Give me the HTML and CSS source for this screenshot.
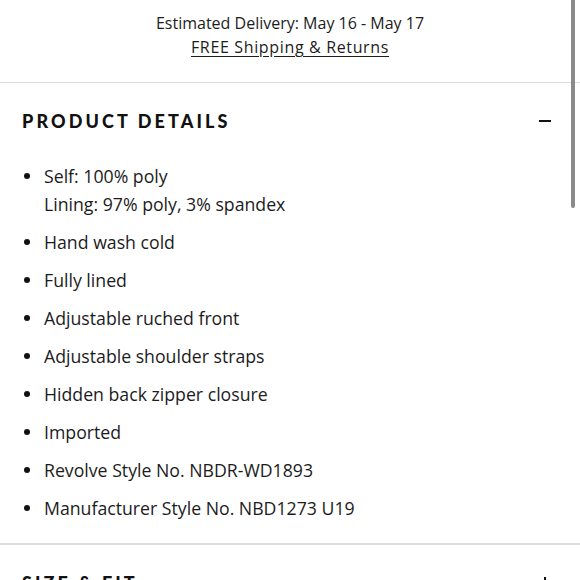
FILE: index.html
```html
<!DOCTYPE html>
<html>
<head>
<meta charset="utf-8">
<link rel="stylesheet" href="styles.css">
</head>
<body>
<div class="page">
  <div class="delivery">
    <div>Estimated Delivery: May 16 - May 17</div>
    <div><a class="link" href="#">FREE Shipping &amp; Returns</a></div>
  </div>
  <section class="acc">
    <div class="acc-head">
      <h2>PRODUCT DETAILS</h2>
      <span class="minus"></span>
    </div>
    <ul class="details">
      <li>Self: 100% poly<br>Lining: 97% poly, 3% spandex</li>
      <li>Hand wash cold</li>
      <li>Fully lined</li>
      <li>Adjustable ruched front</li>
      <li>Adjustable shoulder straps</li>
      <li>Hidden back zipper closure</li>
      <li>Imported</li>
      <li>Revolve Style No. NBDR-WD1893</li>
      <li>Manufacturer Style No. NBD1273 U19</li>
    </ul>
  </section>
  <section class="acc acc-thick">
    <div class="acc-head">
      <h2>SIZE &amp; FIT</h2>
      <span class="plus"></span>
    </div>
  </section>
  <div class="scrollbar"></div>
</div>
</body>
</html>
```
FILE: styles.css
```css
html, body {
  margin: 0;
  padding: 0;
  background: #fff;
}
body {
  font-family: "Open Sans", "Liberation Sans", sans-serif;
  color: #1c1c1c;
  overflow: hidden;
}
.page {
  width: 580px;
  height: 580px;
  overflow: hidden;
}
.delivery {
  text-align: center;
  font-size: 16px;
  line-height: 24px;
  padding: 11px 0 23px;
  border-bottom: 1px solid #dcdcdc;
}
.link {
  color: #1c1c1c;
  text-decoration: underline;
  text-underline-offset: 3px;
  letter-spacing: 0.65px;
}
.acc-head {
  display: flex;
  align-items: center;
  justify-content: space-between;
  padding: 26px 29px 0 22px;
  height: 24px;
}
.acc-head h2 {
  margin: 0;
  font-family: "Lato", "Liberation Sans", sans-serif;
  font-weight: 900;
  font-size: 18px;
  letter-spacing: 3.1px;
  line-height: 24px;
  color: #111;
}
.minus {
  width: 12px;
  height: 2px;
  background: #111;
}
.plus {
  position: relative;
  width: 12px;
  height: 12px;
}
.plus::before, .plus::after {
  content: "";
  position: absolute;
  background: #111;
}
.plus::before { left: 0; right: 0; top: 5px; height: 2px; }
.plus::after { top: 0; bottom: 0; left: 5px; width: 2px; }
.details {
  list-style: none;
  margin: 29px 0 0;
  padding: 0 0 21px 44px;
  font-size: 17.7px;
  line-height: 28px;
  border-bottom: 2px solid #dcdcdc;
}
.details li {
  position: relative;
  margin-bottom: 10px;
}
.details li:last-child { margin-bottom: 0; }
.details li::before {
  content: "";
  position: absolute;
  left: -20px;
  top: 11px;
  width: 6px;
  height: 6px;
  border-radius: 50%;
  background: #111;
}
.scrollbar {
  position: fixed;
  top: 0;
  left: 571px;
  width: 4px;
  height: 208px;
  background: #8a8a8a;
  border-radius: 0 0 2px 2px;
}
```
